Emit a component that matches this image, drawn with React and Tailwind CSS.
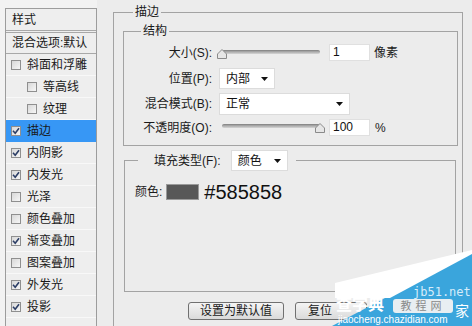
import React from 'react'

const layers = [
  { name: '斜面和浮雕', on: false, sub: false },
  { name: '等高线', on: false, sub: true },
  { name: '纹理', on: false, sub: true },
  { name: '描边', on: true, sub: false, active: true },
  { name: '内阴影', on: true, sub: false },
  { name: '内发光', on: true, sub: false },
  { name: '光泽', on: false, sub: false },
  { name: '颜色叠加', on: false, sub: false },
  { name: '渐变叠加', on: true, sub: false },
  { name: '图案叠加', on: false, sub: false },
  { name: '外发光', on: true, sub: false },
  { name: '投影', on: true, sub: false },
]

function Check({ on }) {
  return (
    <span className="w-[10px] h-[10px] shrink-0 border border-[#8f8f8f] bg-gradient-to-br from-[#d8d8d8] to-[#f6f6f6] flex items-center justify-center">
      {on && (
        <svg width="8" height="8" viewBox="0 0 8 8">
          <path d="M1 3.8 L3.2 6.2 L7 1.2" stroke="#2c3e66" strokeWidth="1.6" fill="none" />
        </svg>
      )}
    </span>
  )
}

function Arrow() {
  return (
    <svg width="7" height="4" viewBox="0 0 7 4">
      <path d="M0 0 H7 L3.5 4 Z" fill="#111" />
    </svg>
  )
}

function Select({ value, className }) {
  return (
    <div className={`bg-white border border-[#dcdcdc] flex items-center justify-between pl-[6px] pr-[6px] text-[12px] text-[#111] ${className}`}>
      <span>{value}</span>
      <Arrow />
    </div>
  )
}

function Slider({ atEnd }) {
  return (
    <div className="relative w-[108px] h-[14px] shrink-0">
      <div className="absolute left-[5px] right-[5px] top-[3px] h-[4px] rounded-full bg-gradient-to-b from-[#9a9a9a] to-[#d6d6d6] border-t border-[#8a8a8a]" />
      <svg className={`absolute top-[2px] ${atEnd ? 'left-[98px]' : 'left-0'}`} width="10" height="10" viewBox="0 0 10 10">
        <path d="M5 0.5 L9.5 5 V9.5 H0.5 V5 Z" fill="#e6e6e6" stroke="#8a8a8a" />
      </svg>
    </div>
  )
}

function Label({ children }) {
  return <div className="w-[89px] shrink-0 text-right text-[12px] text-[#1a1a1a] pr-[1px]">{children}</div>
}

function Input({ value }) {
  return (
    <div className="w-[41px] h-[17px] bg-white border border-[#e0e0e0] text-[12px] leading-[15px] pl-[3px] text-[#111]">{value}</div>
  )
}

export default function App() {
  return (
    <div className="relative w-[472px] h-[326px] overflow-hidden bg-[#ececec] flex font-['Liberation_Sans','Noto_Sans_CJK_SC',sans-serif] text-[#1a1a1a]">
      {/* Style list */}
      <div className="w-[97px] shrink-0 bg-[#f2f2f2] pl-[5px] pt-[8px]">
        <div className="h-[330px] bg-[#eeeeee] border-l border-t border-r border-[#9c9c9c]">
          <div className="h-[22px] border-b border-[#a8a8a8] pl-[6px] flex items-center text-[12px]">样式</div>
          <div className="h-[2px] border-b border-[#a8a8a8]" />
          <div className="h-[21px] border-b border-[#a8a8a8] pl-[6px] flex items-center text-[12px]">混合选项:默认</div>
          {layers.map(l => (
            <div key={l.name}
              className={`h-[22px] flex items-center gap-[6px] text-[12px] border-b ${l.active ? 'bg-[#3797f5] border-[#3797f5]' : 'border-[#f8f8f8]'} ${l.sub ? 'pl-[21px]' : 'pl-[5px]'}`}>
              <Check on={l.on} />
              <span>{l.name}</span>
            </div>
          ))}
        </div>
      </div>

      {/* Settings */}
      <div className="flex-1 pt-[5px] pl-[16px] pr-[9px]">
        <fieldset className="border border-[#a3a3a3] h-[340px]">
          <legend className="ml-[19px] px-[2px] text-[12px] leading-[14px]">描边</legend>

          <fieldset className="ml-[9px] mr-[4px] mt-[5px] border border-[#a3a3a3] pb-[8px]">
            <legend className="ml-[17px] px-[2px] text-[12px] leading-[14px]">结构</legend>

            <div className="mt-[4px] h-[21px] flex items-center">
              <Label>大小(S):</Label>
              <div className="ml-[4px] mt-[2px]"><Slider /></div>
              <div className="ml-[4px]"><Input value="1" /></div>
              <span className="ml-[4px] text-[12px]">像素</span>
            </div>

            <div className="mt-[5px] h-[21px] flex items-center">
              <Label>位置(P):</Label>
              <Select value="内部" className="ml-[6px] w-[56px] h-[21px]" />
            </div>

            <div className="mt-[4px] h-[22px] flex items-center">
              <Label>混合模式(B):</Label>
              <Select value="正常" className="ml-[6px] w-[131px] h-[22px]" />
            </div>

            <div className="mt-[3px] h-[19px] flex items-center">
              <Label>不透明度(O):</Label>
              <div className="ml-[4px] mt-[1px]"><Slider atEnd /></div>
              <div className="ml-[4px]"><Input value="100" /></div>
              <span className="ml-[5px] text-[12px]">%</span>
            </div>
          </fieldset>

          <fieldset className="ml-[10px] mr-[6px] mt-[4px] border border-[#a3a3a3]">
            <legend className="ml-[13px] pl-[16px] pr-[8px]">
              <div className="flex items-center gap-[10px] text-[12px]">
                <span>填充类型(F):</span>
                <Select value="颜色" className="w-[57px] h-[21px]" />
              </div>
            </legend>
            <div className="h-[120px] pl-[10px] pt-[13px]">
              <div className="h-[16px] flex items-center">
                <span className="text-[12px]">颜色:</span>
                <span className="ml-[4px] w-[33px] h-[16px] bg-[#585858] border border-[#9a9a9a]" />
                <span className="ml-[5px] text-[20px] leading-[20px] text-[#111]">#585858</span>
              </div>
            </div>
          </fieldset>

          <div className="mt-[10px] pl-[74px] flex gap-[11px]">
            <button className="w-[96px] h-[18px] border border-[#707070] rounded-[3px] bg-gradient-to-b from-[#f4f4f4] to-[#dadada] text-[12px] leading-[16px]">设置为默认值</button>
            <button className="w-[72px] h-[18px] border border-[#707070] rounded-[3px] bg-gradient-to-b from-[#f4f4f4] to-[#dadada] text-[12px] leading-[16px] text-left pl-[12px] whitespace-nowrap overflow-hidden">复位</button>
          </div>
        </fieldset>
      </div>

      {/* Watermark */}
      <svg className="absolute left-[330px] top-[248px]" width="142" height="78" viewBox="0 0 142 78">
        <path d="M142 4 V78 H2 Z" fill="#3aa5dc" />
        <path d="M5 35 L142 2 V6 L60 50 L5 50 Z" fill="#ffffff" />
      </svg>
      <div className="absolute left-[413px] top-[286px] text-[12px] leading-[12px] text-[#d6ecfa] font-['DejaVu_Sans_Mono',monospace]">jb51.net</div>
      <div className="absolute left-[393px] top-[299px] w-[60px] h-[14px] rounded-[3px] bg-[#e8eef2] text-[11px] leading-[14px] text-center tracking-[4px] text-[#8a8a8a]">教程网</div>
      <div className="absolute left-[336px] top-[296px] text-[16px] leading-[17px] font-bold text-white">查字典</div>
      <div className="absolute left-[455px] top-[303px] text-[14px] leading-[16px] text-white">家</div>
      <div className="absolute left-[338px] top-[314px] text-[10px] leading-[11px] text-white">jiaocheng.chazidian.com</div>
    </div>
  )
}
